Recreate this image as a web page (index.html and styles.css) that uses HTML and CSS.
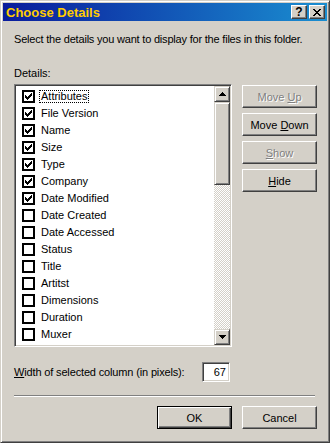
FILE: index.html
```html
<!DOCTYPE html>
<html lang="en">
<head>
  <meta charset="UTF-8" />
  <title>Choose Details</title>
  <link rel="stylesheet" href="styles.css">
</head>
<body>
  <div class="window">
    <div class="titlebar">
      <span class="title">Choose Details</span>
      <div class="caption-buttons">
        <div class="cap-btn help">?</div>
        <div class="cap-btn">
          <svg width="8" height="7" viewBox="0 0 8 7" shape-rendering="crispEdges">
            <path d="M0 0h2v1h-2z M6 0h2v1h-2z M1 1h2v1h-2z M5 1h2v1h-2z M2 2h4v1h-4z M3 3h2v1h-2z M2 4h4v1h-4z M1 5h2v1h-2z M5 5h2v1h-2z M0 6h2v1h-2z M6 6h2v1h-2z" fill="#000"/>
          </svg>
        </div>
      </div>
    </div>

    <div class="content">
      <p class="intro">Select the details you want to display for the files in this folder.</p>
      <p class="label">Details:</p>

      <div class="main">
        <div class="listbox">
          <ul class="items">
            <li class="item"><span class="check on"></span><span class="name focus">Attributes</span></li>
            <li class="item"><span class="check on"></span><span class="name">File Version</span></li>
            <li class="item"><span class="check on"></span><span class="name">Name</span></li>
            <li class="item"><span class="check on"></span><span class="name">Size</span></li>
            <li class="item"><span class="check on"></span><span class="name">Type</span></li>
            <li class="item"><span class="check on"></span><span class="name">Company</span></li>
            <li class="item"><span class="check on"></span><span class="name">Date Modified</span></li>
            <li class="item"><span class="check"></span><span class="name">Date Created</span></li>
            <li class="item"><span class="check"></span><span class="name">Date Accessed</span></li>
            <li class="item"><span class="check"></span><span class="name">Status</span></li>
            <li class="item"><span class="check"></span><span class="name">Title</span></li>
            <li class="item"><span class="check"></span><span class="name">Artitst</span></li>
            <li class="item"><span class="check"></span><span class="name">Dimensions</span></li>
            <li class="item"><span class="check"></span><span class="name">Duration</span></li>
            <li class="item"><span class="check"></span><span class="name">Muxer</span></li>
            <li class="item"><span class="check"></span></li>
          </ul>
          <div class="scrollbar">
            <div class="sb-btn">
              <svg width="7" height="4" viewBox="0 0 7 4" shape-rendering="crispEdges">
                <path d="M3 0h1v1h-1z M2 1h3v1h-3z M1 2h5v1h-5z M0 3h7v1h-7z" fill="#000"/>
              </svg>
            </div>
            <div class="sb-thumb"></div>
            <div class="sb-track"></div>
            <div class="sb-btn">
              <svg width="7" height="4" viewBox="0 0 7 4" shape-rendering="crispEdges">
                <path d="M0 0h7v1h-7z M1 1h5v1h-5z M2 2h3v1h-3z M3 3h1v1h-1z" fill="#000"/>
              </svg>
            </div>
          </div>
        </div>

        <div class="actions">
          <button class="btn" disabled>Move <u>U</u>p</button>
          <button class="btn">Move <u>D</u>own</button>
          <button class="btn" disabled><u>S</u>how</button>
          <button class="btn"><u>H</u>ide</button>
        </div>
      </div>

      <div class="width-row">
        <span class="width-label"><u>W</u>idth of selected column (in pixels):</span>
        <div class="num">67</div>
      </div>

      <hr class="separator">

      <div class="footer-buttons">
        <button class="btn default">OK</button>
        <button class="btn">Cancel</button>
      </div>
    </div>
  </div>
</body>
</html>
```

FILE: styles.css
```css
* {
  box-sizing: border-box;
  margin: 0;
  padding: 0;
}

body {
  font-family: 'Liberation Sans', Arial, sans-serif;
  font-size: 11px;
  color: #000;
  background: #d4d0c8;
}

.window {
  width: 330px;
  height: 443px;
  background: #d4d0c8;
  border: 1px solid;
  border-color: #d4d0c8 #404040 #404040 #d4d0c8;
  box-shadow: inset 1px 1px #fff, inset -1px -1px #808080;
  padding: 2px;
}

.titlebar {
  height: 18px;
  display: flex;
  align-items: center;
  justify-content: space-between;
  padding: 0 2px 0 3px;
  background: linear-gradient(to right, #0a1c9c, #1a8ed0);
}

.title {
  color: #ffcc00;
  font-weight: bold;
  font-size: 13px;
}

.caption-buttons {
  display: flex;
  gap: 2px;
}

.cap-btn {
  width: 16px;
  height: 14px;
  display: flex;
  align-items: center;
  justify-content: center;
  background: #d4d0c8;
  border: 1px solid;
  border-color: #fff #404040 #404040 #fff;
  box-shadow: inset -1px -1px #808080;
}

.cap-btn.help {
  font-weight: bold;
  font-size: 12px;
  line-height: 12px;
}

.content {
  padding: 0 10px 0 11px;
}

.intro {
  margin-top: 12px;
  line-height: 13px;
  letter-spacing: -0.2px;
}

.label {
  margin-top: 21px;
  line-height: 13px;
}

.main {
  display: flex;
  margin-top: 4px;
}

.listbox {
  width: 218px;
  height: 263px;
  display: flex;
  background: #fff;
  border: 1px solid;
  border-color: #808080 #fff #fff #808080;
  box-shadow: inset 1px 1px #404040, inset -1px -1px #d4d0c8;
  padding: 1px;
}

.items {
  flex: 1;
  list-style: none;
  padding-top: 2px;
  overflow: hidden;
}

.item {
  height: 17px;
  display: flex;
  align-items: center;
  padding-left: 6px;
}

.check {
  width: 13px;
  height: 13px;
  flex: none;
  border: 2px solid #000;
  background: #fff;
}

.check.on {
  background: #fff url("data:image/svg+xml,%3Csvg xmlns='http://www.w3.org/2000/svg' width='9' height='9' shape-rendering='crispEdges'%3E%3Cpath d='M7 1h1v1h-1z M6 2h2v1h-2z M1 3h1v1h-1z M5 3h3v1h-3z M1 4h2v1h-2z M4 4h3v1h-3z M1 5h5v1h-5z M2 6h3v1h-3z M3 7h1v1h-1z' fill='%23000'/%3E%3C/svg%3E") no-repeat 0 0;
}

.name {
  margin-left: 4px;
  padding: 0 1px;
  border: 1px solid transparent;
  line-height: 11px;
  white-space: nowrap;
}

.name.focus {
  border: 1px dotted #000;
}

.scrollbar {
  width: 16px;
  display: flex;
  flex-direction: column;
}

.sb-btn,
.sb-thumb {
  background: #d4d0c8;
  border: 1px solid;
  border-color: #d4d0c8 #404040 #404040 #d4d0c8;
  box-shadow: inset 1px 1px #fff, inset -1px -1px #808080;
}

.sb-btn {
  height: 16px;
  display: flex;
  align-items: center;
  justify-content: center;
}

.sb-thumb {
  height: 83px;
}

.sb-track {
  flex: 1;
  background: repeating-conic-gradient(#fff 0 25%, #d4d0c8 0 50%) 0 0 / 2px 2px;
}

.actions {
  width: 75px;
  margin-left: 10px;
  margin-top: 1px;
  display: flex;
  flex-direction: column;
  gap: 5px;
}

.btn {
  height: 23px;
  font-family: inherit;
  font-size: 11px;
  color: #000;
  background: #d4d0c8;
  border: 1px solid;
  border-color: #fff #404040 #404040 #fff;
  box-shadow: inset -1px -1px #808080;
}

.btn:disabled {
  color: #808080;
  text-shadow: 1px 1px #fff;
}

.btn.default {
  border-color: #000;
  box-shadow: inset 1px 1px #fff, inset -1px -1px #404040, inset -2px -2px #808080;
}

.width-row {
  display: flex;
  align-items: center;
  margin-top: 15px;
}

.width-label {
  width: 188px;
  letter-spacing: -0.15px;
}

.num {
  width: 28px;
  height: 20px;
  background: #fff;
  border: 1px solid;
  border-color: #808080 #fff #fff #808080;
  box-shadow: inset 1px 1px #404040, inset -1px -1px #d4d0c8;
  text-align: right;
  padding-right: 3px;
  line-height: 18px;
}

.separator {
  margin-top: 13px;
  margin-right: 2px;
  height: 0;
  border: 0;
  border-top: 1px solid #808080;
  border-bottom: 1px solid #fff;
}

.footer-buttons {
  display: flex;
  justify-content: flex-end;
  gap: 10px;
  margin-top: 9px;
}

.footer-buttons .btn {
  width: 75px;
}
```
